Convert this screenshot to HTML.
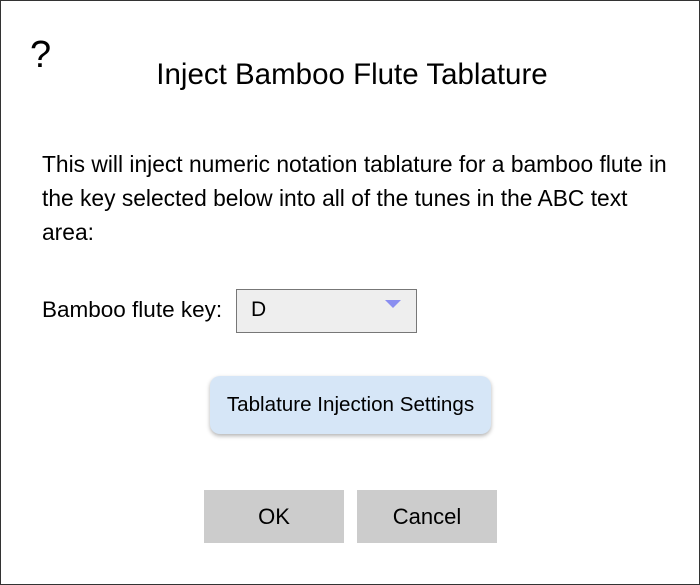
<!DOCTYPE html>
<html><head><style>
body{margin:0;width:700px;height:585px;overflow:hidden;font-family:"Liberation Sans",sans-serif;color:#000;background:#fff}
.f{position:absolute;left:0;top:0;width:698px;height:583px;border:1px solid #333}
.a{position:absolute;white-space:nowrap}
</style></head><body>
<div class="a" style="left:30px;top:34px;font-size:38px">?</div>
<div class="f"></div>
<div class="a" style="left:0;width:704px;text-align:center;top:58px;font-size:29.5px">Inject Bamboo Flute Tablature</div>
<div class="a" style="left:42px;top:147px;font-size:22.8px;line-height:34px">This will inject numeric notation tablature for a bamboo flute in<br>the key selected below into all of the tunes in the ABC text<br>area:</div>
<div class="a" style="left:42px;top:297px;font-size:22.5px">Bamboo flute key:</div>
<div class="a" style="left:236px;top:289px;width:179px;height:42px;background:#eee;border:1px solid #777"></div>
<div class="a" style="left:251px;top:298px;font-size:21px">D</div>
<svg class="a" style="left:385px;top:300px" width="16" height="10"><path d="M0 0H16L8 8Z" fill="#8a8ef0"/></svg>
<div class="a" style="left:210px;top:376px;width:281px;height:58px;background:#d6e6f7;border-radius:10px;box-shadow:0 2px 4px rgba(0,0,0,.3);font-size:20.6px;line-height:58px;text-align:center">Tablature Injection Settings</div>
<div class="a" style="left:204px;top:490px;width:140px;height:53px;background:#ccc;font-size:22px;line-height:53px;text-align:center">OK</div>
<div class="a" style="left:357px;top:490px;width:140px;height:53px;background:#ccc;font-size:22px;line-height:53px;text-align:center">Cancel</div>
</body></html>
